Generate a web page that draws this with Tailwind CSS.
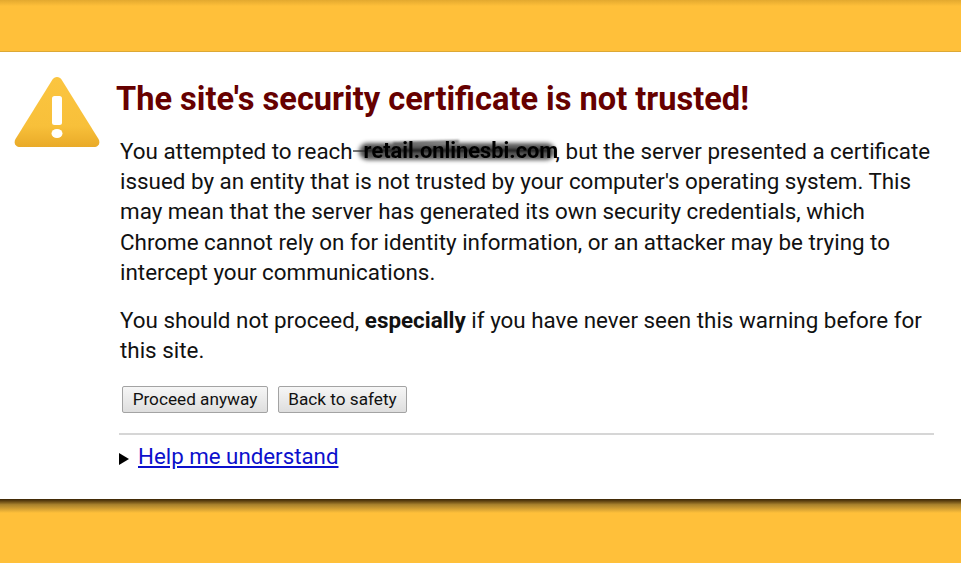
<!DOCTYPE html>
<html lang="en">
<head>
  <meta charset="UTF-8" />
  <title>Security warning</title>
  <script src="https://cdn.jsdelivr.net/npm/@tailwindcss/browser@4"></script>
</head>
<body class="h-[563px] overflow-hidden bg-[#ffc03a] font-['Roboto',sans-serif] flex flex-col">
  <div class="h-[52px] shrink-0 bg-gradient-to-b from-[#e3a92f] via-[#ffc03a] via-[12%] to-[#ffc03a] border-b border-[#dca836]"></div>

  <div class="h-[447px] shrink-0 bg-white flex pl-[14px] pr-[27px]">
    <svg class="w-[86px] h-[72px] mt-[25px] shrink-0" viewBox="0 0 86 72">
      <defs>
        <linearGradient id="warn" x1="0" y1="0" x2="0" y2="1">
          <stop offset="0" stop-color="#fbc540" />
          <stop offset="0.7" stop-color="#f8c03a" />
          <stop offset="1" stop-color="#e9aa28" />
        </linearGradient>
      </defs>
      <path d="M43 0c2 0 3.500 1 4.500 2.500L84.500 62c1.500 2.500 1 5-.5 6.500-1 1-2.500 1.500-4 1.500H6c-1.500 0-3-.5-4-1.500C.5 67 0 64.500 1.500 62L38.500 2.500C39.500 1 41 0 43 0z" fill="url(#warn)" />
      <rect x="38" y="19" width="10" height="29" rx="2.500" fill="#fff" />
      <ellipse cx="43" cy="56.500" rx="5.500" ry="4.500" fill="#fff" />
    </svg>

    <div class="flex-1 ml-[16px] min-w-0">
      <h1 class="mt-[24px] h-[47px] text-[32.600px] leading-[47px] font-bold text-[#660000] whitespace-nowrap">The site's security certificate is not trusted!</h1>

      <div class="ml-[4px] mt-[13px] text-[22.400px] leading-[30.200px] text-[#111]">
        <p class="whitespace-nowrap">You attempted to reach<span class="relative inline-block w-[203px] h-[30px] align-bottom font-bold text-black"><span class="absolute left-0 w-[12px] top-[14px] h-[2px] bg-[#777]"></span><span class="absolute left-[40px] w-[66px] top-[5px] h-[3px] -rotate-2 bg-[#777]/80 blur-[1px]"></span><span class="absolute left-[6px] right-[1px] top-[7px] h-[17px] rounded-full bg-[#2a2a2a]/80 blur-[2px]"></span><span class="absolute left-[12px] right-[6px] top-[13px] h-[3px] bg-[#222] blur-[1px]"></span><span class="absolute left-[11px] top-0 whitespace-nowrap text-[21.800px] blur-[0.5px]">retail.onlinesbi.com</span></span>, but the server presented a certificate<br />issued by an entity that is not trusted by your computer's operating system. This<br />may mean that the server has generated its own security credentials, which<br />Chrome cannot rely on for identity information, or an attacker may be trying to<br />intercept your communications.</p>
        <p class="mt-[18px] whitespace-nowrap">You should not proceed, <strong class="font-bold">especially</strong> if you have never seen this warning before for<br />this site.</p>
      </div>

      <div class="ml-[6px] mt-[21px] flex gap-[10px]">
        <button class="h-[27px] w-[146px] rounded-[2px] border border-[#a3a3a3] bg-gradient-to-b from-[#f6f6f6] to-[#dedede] text-[17.200px] leading-none text-[#111]">Proceed anyway</button>
        <button class="h-[27px] w-[129px] rounded-[2px] border border-[#a3a3a3] bg-gradient-to-b from-[#f6f6f6] to-[#dedede] text-[17.200px] leading-none text-[#111]">Back to safety</button>
      </div>

      <div class="ml-[3px] mt-[20px] border-t-2 border-[#d6d6d6] pt-[6px] flex items-center">
        <span class="w-0 h-0 mt-[6px] border-y-[6px] border-y-transparent border-l-[10px] border-l-black"></span>
        <a href="#" class="ml-[9px] text-[22.300px] leading-[30px] text-[#0c10cc] underline">Help me understand</a>
      </div>
    </div>
  </div>

  <div class="h-[14px] shrink-0 bg-gradient-to-b from-[#3a2405] via-[#a8812c] via-[40%] to-[#ffc03a]"></div>
</body>
</html>
